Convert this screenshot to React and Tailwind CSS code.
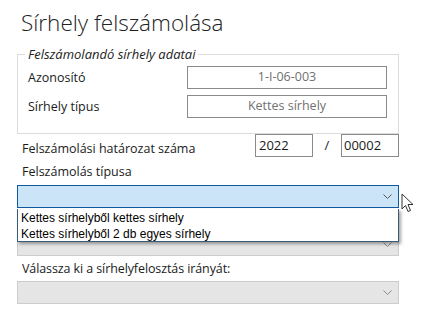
import React from "react";

const Chevron = ({ color = "#606060" }) => (
  <svg width="9" height="6" viewBox="0 0 9 6" className="block">
    <path d="M0.5 0.5 L4.5 4.5 L8.5 0.5" fill="none" stroke={color} strokeWidth="1" />
  </svg>
);

export default function App() {
  const sans = { fontFamily: '"Open Sans", "Noto Sans", sans-serif' };
  return (
    <div
      className="relative w-[427px] h-[322px] bg-white overflow-hidden text-[#1b1b1b]"
      style={sans}
    >
      <div className="pl-[17px] w-[399px] box-content">
        <div className="h-[46px] pl-[4px] pt-[8px] text-[22.5px] font-light leading-[30px] text-[#222]">
          Sírhely felszámolása
        </div>
        <fieldset className="border border-[#dcdcdc] h-[88px] w-[382px] pl-[10px] m-0 p-0">
          <legend className="-ml-[3px] pl-[3px] pr-[3px] text-[13px] italic leading-[16px] text-[#222]">
            Felszámolandó sírhely adatai
          </legend>
          <div className="flex items-center h-[23px] mt-[4px]">
            <div className="w-[159px] text-[12.5px] leading-[16px]">Azonosító</div>
            <div className="w-[200px] h-[23px] border border-[#8a8a8a] flex items-center justify-center text-[12.5px] text-[#707070]">
              1-I-06-003
            </div>
          </div>
          <div className="flex items-center h-[23px] mt-[6px]">
            <div className="w-[159px] text-[12.5px] leading-[16px]">Sírhely típus</div>
            <div className="w-[200px] h-[23px] border border-[#8a8a8a] flex items-center justify-center text-[12.5px] text-[#707070]">
              Kettes sírhely
            </div>
          </div>
        </fieldset>
        <div className="flex items-center h-[23px] w-[382px]">
          <div className="flex-1 pl-[5px] pt-[7px] text-[12.5px] leading-[16px]">Felszámolási határozat száma</div>
          <div className="w-[58px] h-[23px] border border-[#8a8a8a] flex items-center pl-[3px] text-[13px]">2022</div>
          <div className="w-[28px] text-center text-[13px]">/</div>
          <div className="w-[58px] h-[23px] border border-[#8a8a8a] flex items-center pl-[2px] text-[13px]">00002</div>
        </div>
        <div className="h-[28px] pl-[5px] pt-[7px] text-[12.5px] leading-[16px]">Felszámolás típusa</div>
        <div className="w-[382px] h-[23px] bg-[#cce4f7] border border-[#0f5a9c] flex items-center justify-end pr-[6px]">
          <Chevron color="#555" />
        </div>
        <div className="w-[382px] h-[23px] mt-[25px] bg-[#e5e5e5] border border-[#cccccc] flex items-center justify-end pr-[6px]">
          <Chevron color="#8a8a8a" />
        </div>
        <div className="h-[25px] pl-[5px] pt-[5px] text-[12.5px] leading-[16px] tracking-[-0.1px]">Válassza ki a sírhelyfelosztás irányát:</div>
        <div className="w-[382px] h-[23px] bg-[#e5e5e5] border border-[#cccccc] flex items-center justify-end pr-[6px]">
          <Chevron color="#8a8a8a" />
        </div>
      </div>

      <div
        className="absolute left-[17px] top-[209px] w-[382px] h-[33px] bg-white border border-[#3b5a78] border-t-0 shadow-[2px_2px_3px_rgba(0,0,0,0.35)] pl-[3px] pt-[1px] text-[12px] leading-[16px] text-black"
        style={{ fontFamily: '"Liberation Sans", Arial, sans-serif' }}
      >
        <div>Kettes sírhelyből kettes sírhely</div>
        <div>Kettes sírhelyből 2 db egyes sírhely</div>
      </div>

      <svg className="absolute left-[401px] top-[193px]" width="14" height="22" viewBox="0 0 14 22">
        <path d="M1 1 L1 16 L4.5 12.5 L7 18.5 L9.5 17.5 L7 11.5 L12 11.5 Z" fill="white" stroke="#333" strokeWidth="1" strokeLinejoin="round" />
      </svg>
    </div>
  );
}
